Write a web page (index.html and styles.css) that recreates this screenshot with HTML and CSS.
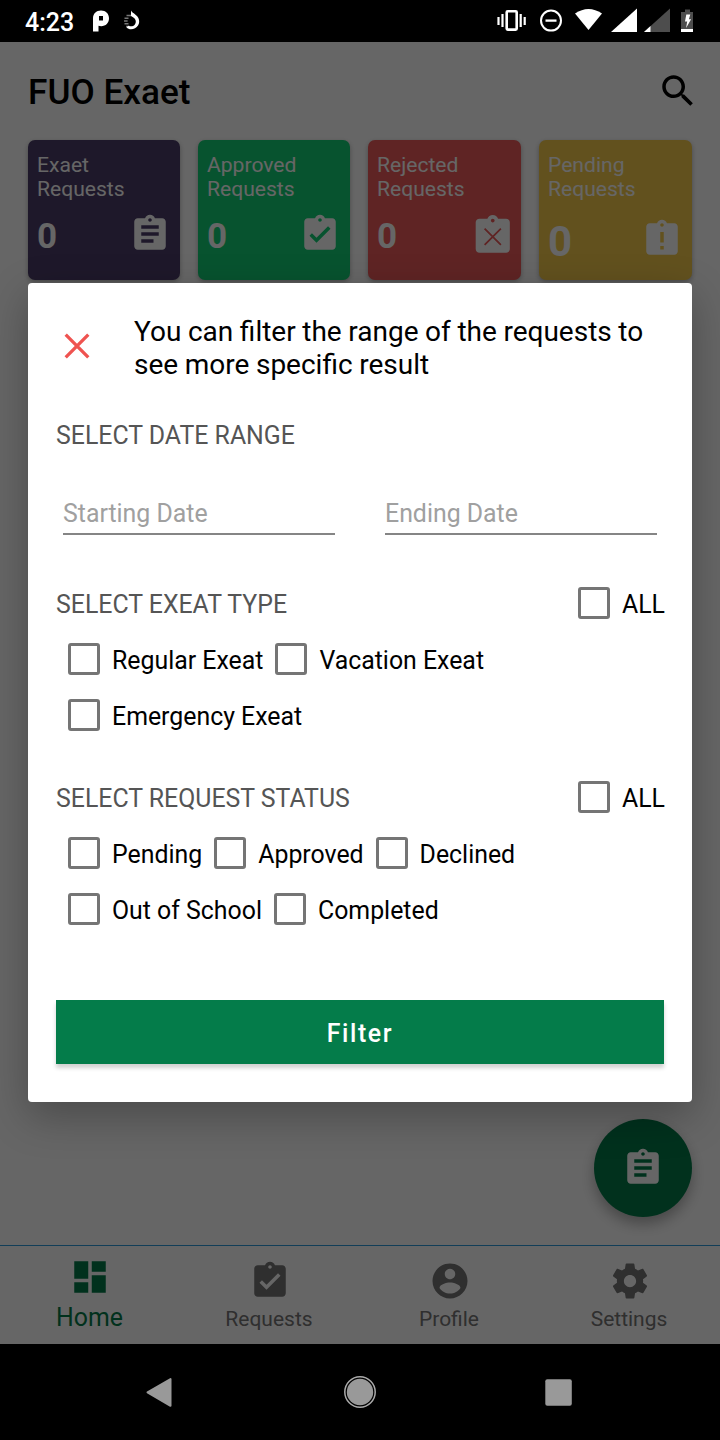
FILE: index.html
```html
<!DOCTYPE html>
<html lang="en">
<head>
<meta charset="utf-8">
<title>FUO Exaet</title>
<link rel="stylesheet" href="styles.css">
</head>
<body>
<svg class="defs" width="0" height="0" aria-hidden="true">
  <symbol id="assignment" viewBox="0 0 24 24"><path d="M19 3h-4.180C14.400 1.840 13.300 1 12 1s-2.400.84-2.820 2H5c-1.100 0-2 .9-2 2v14c0 1.100.9 2 2 2h14c1.100 0 2-.9 2-2V5c0-1.100-.9-2-2-2zm-7 0c.55 0 1 .45 1 1s-.45 1-1 1-1-.45-1-1 .45-1 1-1zm2 14H7v-2h7v2zm3-4H7v-2h10v2zm0-4H7V7h10v2z"/></symbol>
  <symbol id="assignment-done" viewBox="0 0 24 24"><path d="M19 3h-4.180C14.400 1.840 13.300 1 12 1s-2.400.84-2.820 2H5c-1.100 0-2 .9-2 2v14c0 1.100.9 2 2 2h14c1.100 0 2-.9 2-2V5c0-1.100-.9-2-2-2zm-7 0c.55 0 1 .45 1 1s-.45 1-1 1-1-.45-1-1 .45-1 1-1zm-2 14l-4-4 1.410-1.410L10 14.170l6.590-6.590L18 9l-8 8z"/></symbol>
  <symbol id="assignment-late" viewBox="0 0 24 24"><path d="M19 3h-4.180C14.400 1.840 13.300 1 12 1s-2.400.84-2.820 2H5c-1.100 0-2 .9-2 2v14c0 1.100.9 2 2 2h14c1.100 0 2-.9 2-2V5c0-1.100-.9-2-2-2zm-6 15h-2v-2h2v2zm0-4h-2V8h2v6zm-1-9c-.55 0-1-.45-1-1s.45-1 1-1 1 .45 1 1-.45 1-1 1z"/></symbol>
  <symbol id="assignment-rejected" viewBox="0 0 24 24"><path d="M19 3h-4.180C14.400 1.840 13.300 1 12 1s-2.400.84-2.820 2H5c-1.100 0-2 .9-2 2v14c0 1.100.9 2 2 2h14c1.100 0 2-.9 2-2V5c0-1.100-.9-2-2-2zm-7 0c.55 0 1 .45 1 1s-.45 1-1 1-1-.45-1-1 .45-1 1-1z"/><path class="cut" d="M6.500 7.500l11 11M17.500 7.500l-11 11"/></symbol>
</svg>
<div class="screen">
  <header class="status-bar">
    <span class="clock">4:23</span>
    <svg class="status-p" width="18" height="22" viewBox="0 0 18 22"><path fill="#fff" fill-rule="evenodd" d="M1 21.500V8.500C1 3.700 4.200.5 9 .5s8 3.200 8 7.800c0 4.700-3.200 7.900-7.800 7.900-1 0-2-.2-2.700-.4v5.700zM7 6v4.600h4V6z"/></svg>
    <svg class="status-swirl" width="18" height="22" viewBox="0 0 18 22"><path d="M3.500 5.500H8M1.500 8.200h4M1 11h3.600M1.500 13.800h4M3 16.500h3.500" fill="none" stroke="#777" stroke-width="1.600"/><path fill="#fff" d="M8 .5c1 1.800 2.500 2.600 4.500 4.200 5.300 3.800 4.800 10.800-.5 13.500-3.200 1.700-6.500 1.300-8.500-1l2-1.500c2 1 4.700.8 6.200-1 2-2.500 1.300-5.700-1.700-7.400L8 6z"/></svg>
    <svg class="status-icons" width="200" height="42" viewBox="494 0 200 42">
      <g fill="none" stroke="#fff"><rect x="506.700" y="11.200" width="10" height="18.400" rx="1" stroke-width="2.600"/><path stroke-width="2.200" d="M498.500 17v8M502.500 14v13M520.700 14v13M524.700 17v8"/><circle cx="551" cy="20.600" r="10" stroke-width="2"/><path stroke-width="2.300" d="M545.500 20.600h11"/></g>
      <g fill="#fff"><path d="M575 13.500Q588.500 4.500 602 13.500L588.500 30z"/><path d="M637 8.500V32h-26z"/><path fill="#4d4d4d" d="M670 8.500V32h-26z"/><path d="M650.500 26V32H644z"/><path fill="#4d4d4d" d="M681 12h4V9.500h5V12h3v20h-12z"/><path d="M681 29h12v3h-12zM686.300 14.500h4l-1.400 4.800h2.200l-5 8.700 1.100-6.500h-2.200z"/></g>
    </svg>
  </header>

  <main class="app">
    <div class="app-bar">
      <h1 class="app-title">FUO Exaet</h1>
      <svg class="search" width="42" height="42" viewBox="0 0 24 24"><path d="M15.500 14h-.79l-.28-.27C15.410 12.590 16 11.110 16 9.500 16 5.910 13.090 3 9.500 3S3 5.910 3 9.500 5.910 16 9.500 16c1.610 0 3.090-.59 4.230-1.570l.27.28v.79l5 4.990L20.490 19l-4.990-5zm-6 0C7.010 14 5 11.990 5 9.500S7.010 5 9.500 5 14 7.010 14 9.500 11.990 14 9.500 14z"/></svg>
    </div>
    <section class="cards">
      <article class="card card-all"><p class="card-name">Exaet<br>Requests</p><div class="card-row"><b class="count">0</b><svg class="card-icon"><use href="#assignment"/></svg></div></article>
      <article class="card card-approved"><p class="card-name">Approved<br>Requests</p><div class="card-row"><b class="count">0</b><svg class="card-icon"><use href="#assignment-done"/></svg></div></article>
      <article class="card card-rejected"><p class="card-name">Rejected<br>Requests</p><div class="card-row"><b class="count">0</b><svg class="card-icon"><use href="#assignment-rejected"/></svg></div></article>
      <article class="card card-pending"><p class="card-name">Pending<br>Requests</p><div class="card-row"><b class="count">0</b><svg class="card-icon"><use href="#assignment-late"/></svg></div></article>
    </section>
    <div class="fab"><svg width="42" height="42"><use href="#assignment"/></svg></div>
    <nav class="tabs">
      <a class="tab tab-active"><svg width="42" height="42" viewBox="0 0 24 24"><path d="M3 13h8V3H3v10zm0 8h8v-6H3v6zm10 0h8V11h-8v10zm0-18v6h8V3h-8z"/></svg><span class="tab-name">Home</span></a>
      <a class="tab"><svg width="42" height="42"><use href="#assignment-done"/></svg><span class="tab-name">Requests</span></a>
      <a class="tab"><svg width="42" height="42" viewBox="0 0 24 24"><path d="M12 2C6.480 2 2 6.480 2 12s4.480 10 10 10 10-4.480 10-10S17.520 2 12 2zm0 3c1.660 0 3 1.340 3 3s-1.340 3-3 3-3-1.340-3-3 1.340-3 3-3zm0 14.200c-2.500 0-4.710-1.280-6-3.220.03-1.990 4-3.080 6-3.080 1.990 0 5.970 1.090 6 3.080-1.290 1.940-3.500 3.220-6 3.220z"/></svg><span class="tab-name">Profile</span></a>
      <a class="tab"><svg width="42" height="42" viewBox="0 0 24 24"><path d="M19.430 12.980c.04-.32.070-.64.070-.98s-.03-.66-.07-.98l2.110-1.650c.19-.15.240-.42.120-.64l-2-3.460c-.12-.22-.39-.3-.61-.22l-2.490 1c-.52-.4-1.080-.73-1.690-.98l-.38-2.650C14.460 2.180 14.250 2 14 2h-4c-.25 0-.46.180-.49.420l-.38 2.650c-.61.250-1.170.590-1.690.98l-2.490-1c-.23-.09-.49 0-.61.220l-2 3.460c-.13.220-.07.490.120.640l2.110 1.650c-.04.320-.07.650-.07.980s.03.660.070.980l-2.110 1.650c-.19.150-.24.420-.12.640l2 3.460c.12.220.39.300.61.220l2.490-1c.52.400 1.080.730 1.690.980l.38 2.650c.03.240.24.420.49.420h4c.25 0 .46-.18.490-.42l.38-2.650c.61-.25 1.170-.59 1.690-.98l2.490 1c.23.090.49 0 .61-.22l2-3.460c.12-.22.070-.49-.12-.64l-2.110-1.650zM12 15.500c-1.930 0-3.500-1.570-3.500-3.500s1.570-3.500 3.500-3.500 3.500 1.570 3.500 3.500-1.570 3.500-3.500 3.500z"/></svg><span class="tab-name">Settings</span></a>
    </nav>
    <div class="scrim"></div>
    <section class="dialog">
      <div class="dialog-head">
        <svg class="close" width="42" height="42" viewBox="0 0 42 42"><path d="M9.700 9.700l22.600 22.600M32.300 9.700l-22.600 22.600"/></svg>
        <h2 class="dialog-title">You can filter the range of the requests to see more specific result</h2>
      </div>
      <h3 class="label label-date">SELECT DATE RANGE</h3>
      <div class="dates"><div class="date">Starting Date</div><div class="date">Ending Date</div></div>
      <div class="group-head"><h3 class="label">SELECT EXEAT TYPE</h3><label class="check"><i class="box"></i><span class="all">ALL</span></label></div>
      <div class="options"><label class="check"><i class="box"></i>Regular Exeat</label><label class="check"><i class="box"></i>Vacation Exeat</label></div>
      <div class="options"><label class="check"><i class="box"></i>Emergency Exeat</label></div>
      <div class="group-head group-status"><h3 class="label">SELECT REQUEST STATUS</h3><label class="check"><i class="box"></i><span class="all">ALL</span></label></div>
      <div class="options"><label class="check"><i class="box"></i>Pending</label><label class="check"><i class="box"></i>Approved</label><label class="check"><i class="box"></i>Declined</label></div>
      <div class="options"><label class="check"><i class="box"></i>Out of School</label><label class="check"><i class="box"></i>Completed</label></div>
      <button class="filter">Filter</button>
    </section>
  </main>

  <footer class="system-nav">
    <svg width="40" height="40" viewBox="0 0 40 40"><path d="M6.500 20.300L29.500 7v26.800z" fill="#999" stroke="#999" stroke-width="2" stroke-linejoin="round"/></svg>
    <svg width="40" height="40" viewBox="0 0 40 40"><circle cx="20" cy="20" r="15.200" fill="none" stroke="#aaa" stroke-width="1.500"/><circle cx="20" cy="20" r="13.200" fill="#999"/></svg>
    <svg width="40" height="40" viewBox="0 0 40 40"><rect x="6.300" y="7.300" width="26.500" height="26.500" rx="2" fill="#999"/></svg>
  </footer>
</div>
</body>
</html>
```
FILE: styles.css
```css
* { box-sizing: border-box; }
body { margin: 0; font-family: Roboto, sans-serif; background: #000; }
h1, h2, h3, p { margin: 0; font-weight: 400; }
svg { display: block; flex: none; }
.defs { position: absolute; }
.screen { width: 720px; height: 1440px; display: flex; flex-direction: column; overflow: hidden; }

.status-bar { height: 42px; flex: none; display: flex; align-items: center; padding: 0 26px 0 25px; background: #000; color: #fff; }
.clock { width: 67px; font-size: 25px; font-weight: 500; line-height: 30px; padding-top: 3px; }
.status-swirl { margin-left: 13px; }
.status-icons { margin-left: auto; }

.app { position: relative; height: 1302px; display: flex; flex-direction: column; background: #fff; }
.app-bar { height: 98px; flex: none; display: flex; align-items: center; justify-content: space-between; padding: 0 21.500px 0 28px; }
.app-title { font-size: 35.200px; font-weight: 500; line-height: 41px; padding-top: 2px; }
.cards { display: grid; grid-template-columns: 152px 152px 153px 153px; gap: 18px; padding: 0 28px; }
.card { height: 140px; padding: 13px 9px 0; border-radius: 7px; color: #fff; box-shadow: 0 2px 5px rgba(0, 0, 0, .3); }
.card-all { background: #4b3c69; }
.card-approved { background: #12cf75; }
.card-rejected { background: #ed5a5a; }
.card-pending { background: #f6cb4d; }
.card-name { font-size: 21.100px; line-height: 24px; }
.card-row { display: flex; align-items: flex-start; justify-content: space-between; margin-top: 12px; }
.count { font-size: 35px; line-height: 41px; padding-top: 3px; }
.card-icon { width: 42px; height: 42px; fill: #fff; }
.card-rejected .card-icon { width: 45.500px; height: 45.500px; margin-right: -3.500px; }
.cut { fill: none; stroke: #ed5a5a; stroke-width: 1.200; transform: translate(12px, 12.500px) scale(.78) translate(-12px, -13px); }
.card-pending .count { font-size: 42px; line-height: 49px; padding-top: 4px; }
.card-pending .card-icon { margin-top: 5px; }

.fab { position: absolute; right: 28px; bottom: 127px; width: 98px; height: 98px; border-radius: 50%; background: #047c4a; display: grid; place-items: center; fill: #fff; box-shadow: 0 7px 14px rgba(0, 0, 0, .3); }

.tabs { height: 99px; margin-top: auto; display: flex; border-top: 1px solid #2d9cdb; }
.tab { flex: 1; display: flex; flex-direction: column; align-items: center; padding-top: 14px; color: #757575; fill: #757575; }
.tab-name { font-size: 21px; line-height: 25px; margin-top: 5px; margin-right: 2px; }
.tab-active { padding-top: 10px; color: #047c4a; fill: #047c4a; }
.tab-active .tab-name { font-size: 24.870px; line-height: 29px; margin-top: 5px; margin-right: 1px; }

.scrim { position: absolute; inset: 0; background: rgba(0, 0, 0, .6); }
.dialog { position: absolute; left: 28px; right: 28px; top: 241px; height: 819px; padding: 32px 28px 0; border-radius: 4px; background: #fff; box-shadow: 0 14px 42px rgba(0, 0, 0, .28); display: flex; flex-direction: column; }
.dialog-head { display: flex; height: 66px; }
.close { margin-top: 10px; stroke: #ef5350; stroke-width: 3.300; fill: none; }
.dialog-title { margin-left: 36px; flex: 1; font-size: 28px; line-height: 33px; word-spacing: -.35px; }
.label { font-size: 24.870px; line-height: 29px; color: #555; }
.label-date { margin-top: 40px; }
.dates { display: flex; gap: 50px; padding: 0 7px; margin-top: 49px; }
.date { flex: 1; height: 36px; font-size: 24.870px; line-height: 29px; color: #a0a0a0; border-bottom: 2px solid #858585; }
.group-head { display: flex; height: 56px; align-items: center; justify-content: space-between; margin-top: 41px; }
.group-status { margin-top: 26px; }
.options { display: flex; height: 56px; }
.check { display: flex; height: 56px; align-items: center; font-size: 24.870px; line-height: 29px; color: #000; }
.all { width: 42px; }
.box { width: 32px; height: 32px; margin: 0 12px 2px; border: 3px solid #757575; border-radius: 3px; }
.filter { height: 64px; margin-top: 62px; padding: 2px 0 0; border: 0; background: #047c4a; color: #fff; font: 500 24.870px/29px Roboto, sans-serif; letter-spacing: 1.600px; box-shadow: 0 4px 4px rgba(0, 0, 0, .18); }

.system-nav { height: 96px; display: flex; align-items: center; justify-content: center; gap: 159px; background: #000; }
```
